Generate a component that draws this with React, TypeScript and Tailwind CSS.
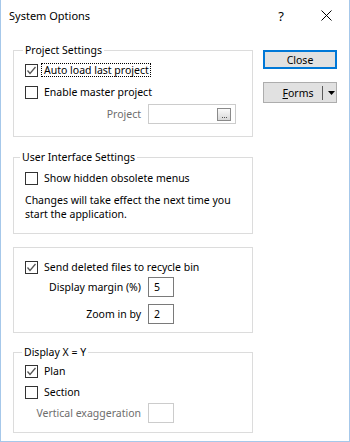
import React from "react";

function Box({ checked }: { checked?: boolean }) {
  return (
    <span className="flex h-[13px] w-[13px] shrink-0 items-center justify-center border border-[#333333] bg-white">
      {checked && (
        <svg width="11" height="11" viewBox="0 0 11 11">
          <path d="M1.5 5.5 L4 8.5 L9.5 2" fill="none" stroke="#555555" strokeWidth="1.3" />
        </svg>
      )}
    </span>
  );
}

function Check({ label, checked, focus }: { label: string; checked?: boolean; focus?: boolean }) {
  return (
    <div className="flex h-[16px] items-center">
      <Box checked={checked} />
      {focus ? (
        <span className="ml-[3px] border border-dotted border-black pl-[2px] pr-[1px] leading-[12px]">{label}</span>
      ) : (
        <span className="ml-[6px]">{label}</span>
      )}
    </div>
  );
}

function Field({ label, value, disabled, wide }: { label: string; value?: string; disabled?: boolean; wide?: boolean }) {
  return (
    <div className="flex items-center">
      <span className={`w-[116px] text-right ${disabled ? "text-[#6d6d6d]" : ""}`}>{label}</span>
      <div
        className={`ml-[7px] flex h-[20px] items-center border bg-white ${wide ? "w-[88px]" : "w-[26px]"} ${
          disabled ? "border-[#cccccc]" : "border-[#7a7a7a]"
        }`}
      >
        {value && <span className="pl-[5px]">{value}</span>}
        {wide && (
          <span className="ml-auto mr-[4px] flex h-[13px] w-[14px] items-end justify-center border border-[#8a8a8a] bg-gradient-to-b from-[#fafafa] to-[#d8d8d8] pb-[2px]">
            <span className="flex gap-[1px]">
              <span className="h-[1px] w-[1px] bg-[#555]" />
              <span className="h-[1px] w-[1px] bg-[#555]" />
              <span className="h-[1px] w-[1px] bg-[#555]" />
            </span>
          </span>
        )}
      </div>
    </div>
  );
}

export default function App() {
  return (
    <div className="flex h-[442px] w-[350px] flex-col border-x border-b border-[#a6c8ea] bg-white text-[10.5px] leading-[16px] text-black [font-family:'Noto_Sans',sans-serif]">
      {/* Title bar */}
      <div className="flex h-[31px] shrink-0 items-center">
        <span className="ml-[8px] text-[11px]">System Options</span>
        <span className="ml-auto mr-[37px] text-[13px]">?</span>
        <svg className="mr-[17px]" width="11" height="11" viewBox="0 0 11 11">
          <path d="M0.5 0.5 L10.5 10.5 M10.5 0.5 L0.5 10.5" stroke="#000" strokeWidth="1" />
        </svg>
      </div>

      <div className="flex">
        {/* Groups */}
        <div className="ml-[12px] flex w-[240px] flex-col">
          <fieldset className="mt-[11px] border border-[#dcdcdc] pb-[12px] pl-[11px]">
            <legend className="-ml-[2px] px-[2px] leading-[16px]">Project Settings</legend>
            <div className="mt-[4px]">
              <Check label="Auto load last project" checked focus />
            </div>
            <div className="mt-[6px]">
              <Check label="Enable master project" />
            </div>
            <div className="mt-[4px]">
              <Field label="Project" disabled wide />
            </div>
          </fieldset>

          <fieldset className="mt-[12px] border border-[#dcdcdc] pb-[12px] pl-[11px]">
            <legend className="-ml-[5px] px-[2px] leading-[16px]">User Interface Settings</legend>
            <div className="mt-[5px]">
              <Check label="Show hidden obsolete menus" />
            </div>
            <p className="mt-[7px] leading-[14px]">
              Changes will take effect the next time you
              <br />
              start the application.
            </p>
          </fieldset>

          <fieldset className="mt-[13px] border border-[#dcdcdc] pb-[8px] pl-[11px] pt-[11px]">
            <Check label="Send deleted files to recycle bin" checked />
            <div className="mt-[2px]">
              <Field label="Display margin (%)" value="5" />
            </div>
            <div className="mt-[7px]">
              <Field label="Zoom in by" value="2" />
            </div>
          </fieldset>

          <fieldset className="mt-[11px] border border-[#dcdcdc] pb-[9px] pl-[11px]">
            <legend className="-ml-[3px] px-[2px] leading-[16px]">Display X = Y</legend>
            <div className="mt-[3px]">
              <Check label="Plan" checked />
            </div>
            <div className="mt-[5px]">
              <Check label="Section" />
            </div>
            <div className="mt-[3px]">
              <Field label="Vertical exaggeration" disabled />
            </div>
          </fieldset>
        </div>

        {/* Buttons */}
        <div className="ml-[10px] mt-[19px] flex flex-col">
          <button className="flex h-[19px] w-[74px] items-center justify-center border-2 border-[#0078d7] bg-[#e1e1e1]">
            Close
          </button>
          <button className="mt-[13px] flex h-[21px] w-[74px] items-center border border-[#adadad] bg-[#e1e1e1]">
            <span className="ml-[13px] w-[42px] text-center">
              <span className="underline">F</span>orms
            </span>
            <span className="ml-[3px] h-[14px] w-[1px] bg-[#5a5a5a]" />
            <svg className="ml-[5px]" width="7" height="4" viewBox="0 0 7 4">
              <path d="M0 0 H7 L3.5 4 Z" fill="#000" />
            </svg>
          </button>
        </div>
      </div>
    </div>
  );
}
